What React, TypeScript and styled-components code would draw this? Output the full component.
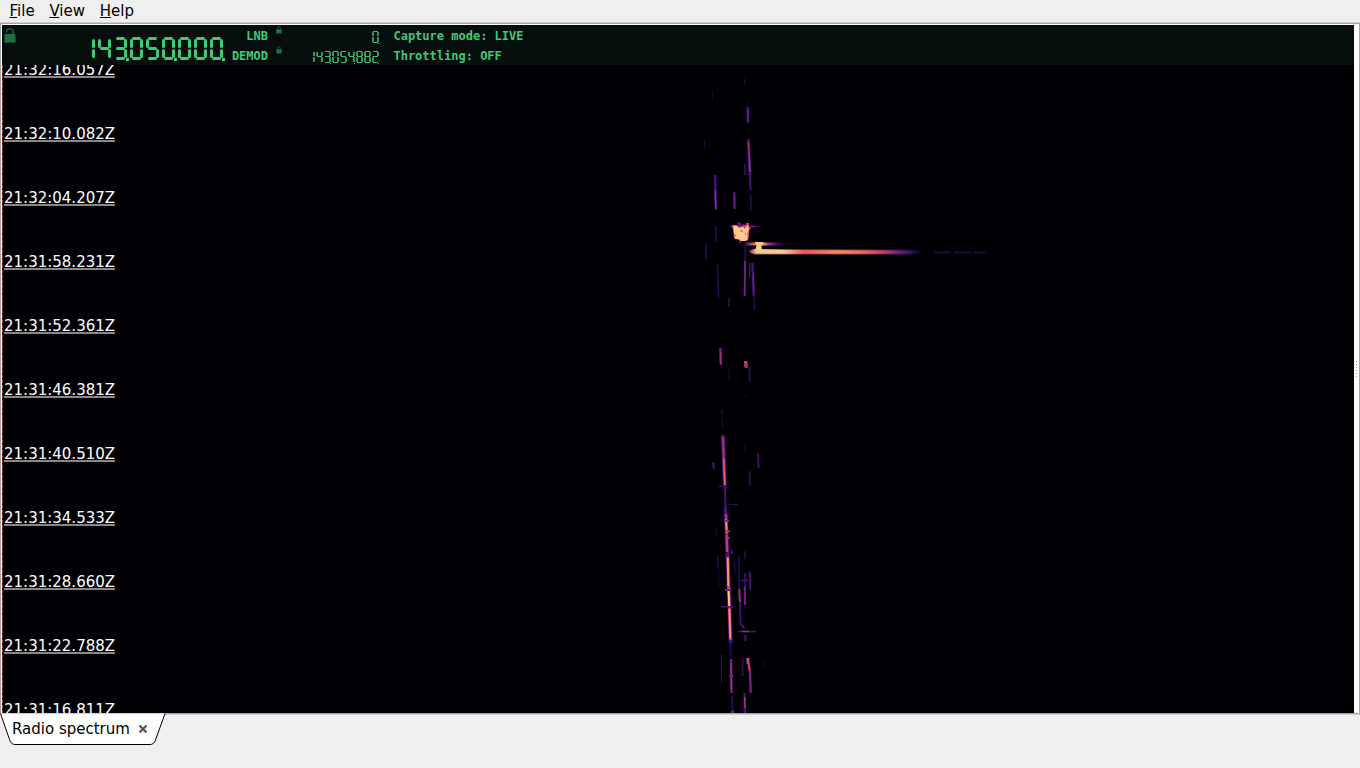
import React from "react";
import styled, { createGlobalStyle } from "styled-components";

const Global = createGlobalStyle`
  * { box-sizing: border-box; }
  html, body { margin: 0; padding: 0; overflow: hidden; background: #efefef; }
`;

const Window = styled.div`
  width: 1360px;
  height: 768px;
  display: flex;
  flex-direction: column;
  background: #efefef;
  color: #000;
  font: 15px/18px "DejaVu Sans", sans-serif;
`;

const MenuBar = styled.nav`
  height: 22px;
  flex: none;
  display: flex;
  padding: 2px 0 0 9.5px;
  gap: 14.8px;
`;

const MenuItem = styled.span`
  white-space: pre;
`;

const Mnemonic = styled.span`
  text-decoration: underline;
  text-decoration-thickness: 1px;
  text-underline-offset: 1px;
`;

const Frame = styled.main`
  height: 693px;
  flex: none;
  display: flex;
  border-top: 1px solid #cfcfcf;
  border-bottom: 1px solid #cfcfcf;
`;

const FrameInner = styled.div`
  flex: 1;
  display: flex;
  background: #fff;
  border: 1px solid #a5a5a5;
  padding: 1px 0 0 1px;
`;

const Panel = styled.section`
  width: 1352px;
  display: flex;
  flex-direction: column;
`;

const Splitter = styled.div`
  flex: 1;
  display: flex;
  flex-direction: column;
  align-items: center;
  justify-content: center;
  gap: 2px;
`;

const Grip = styled.i`
  width: 1px;
  height: 1px;
  background: #999;
`;

const Header = styled.header`
  height: 40px;
  flex: none;
  display: flex;
  background: #060d0d;
  color: #3dcb78;
  font: bold 12px/20px "DejaVu Sans Mono", monospace;
`;

const LockSlot = styled.div`
  width: 80px;
  padding: 3px 0 0 2px;
`;

const MainFrequency = styled.div`
  width: 144px;
  padding-top: 12px;
`;

const Rows = styled.div<{ $width: number; $align?: string }>`
  width: ${(p) => p.$width}px;
  display: flex;
  flex-direction: column;
  align-items: ${(p) => p.$align ?? "flex-start"};
`;

const Row = styled.div<{ $top?: number }>`
  height: 20px;
  padding-top: ${(p) => p.$top ?? 1}px;
  white-space: pre;
`;

const Display = styled.div<{ $gap: number }>`
  display: flex;
  gap: ${(p) => p.$gap}px;
`;

const Digit = styled.div<{ $small?: boolean }>`
  position: relative;
  display: grid;
  grid-template-columns: ${(p) => (p.$small ? "2px 3px 2px" : "3px 7px 3px")};
  grid-template-rows: ${(p) => (p.$small ? "1px 4px 1px 5px 1px" : "3px 7px 3px 7px 3px")};
`;

const Segment = styled.i<{ $col: number; $row: number; $small?: boolean }>`
  grid-column: ${(p) => p.$col};
  grid-row: ${(p) => p.$row};
  margin: ${(p) => (p.$small ? (p.$col === 2 ? "0 -1px" : "0") : p.$col === 2 ? "0 -1px" : "-1px 0")};
  background: ${(p) => (!p.$small ? "#3dcb78" : p.$col === 2 ? "#39bd70" : "#2b985b")};
  border-radius: ${(p) => (p.$small ? 0 : 1.5)}px;
`;

const Point = styled.i<{ $small?: boolean }>`
  position: absolute;
  right: ${(p) => (p.$small ? 0 : -2)}px;
  bottom: -1px;
  width: ${(p) => (p.$small ? 1 : 3)}px;
  height: ${(p) => (p.$small ? 1 : 3)}px;
  background: #3dcb78;
`;

const Waterfall = styled.div`
  position: relative;
  height: 648px;
  overflow: hidden;
  background: #000004;
`;

const Trace = styled.svg`
  display: block;
`;

const TimeScale = styled.div`
  position: absolute;
  left: 0;
  top: -5px;
  padding-left: 2px;
  color: #fff;
`;

const TimeMark = styled.div`
  height: 64px;
`;

const TimeLabel = styled.span`
  display: block;
  height: 18px;
  line-height: 20px;
  border-bottom: 2px solid #888;
`;

const Marker = styled.div`
  position: absolute;
  left: 0;
  top: 0;
  width: 1px;
  height: 648px;
  background: repeating-linear-gradient(#a33c3c 0 3px, #2b0d10 3px 5px);
`;

const Tabs = styled.footer`
  position: relative;
  height: 53px;
  margin-top: -2px;
`;

const Tab = styled.div`
  position: relative;
  width: 166px;
  height: 33px;
`;

const TabShape = styled.svg`
  display: block;
`;

const TabContent = styled.div`
  position: absolute;
  inset: 7px 0 0 12px;
  display: flex;
  gap: 8px;
`;

const CloseIcon = styled.svg`
  margin-top: 4px;
`;

/* Lit segments: a top, b upper right, c lower right, d bottom, e lower left, f upper left, g middle. */
const LIT: Record<string, string> = {
  "0": "abcdef", "1": "bc", "2": "abdeg", "3": "abcdg", "4": "bcfg",
  "5": "acdfg", "8": "abcdefg",
};

const CELL: Record<string, [number, number]> = {
  a: [2, 1], b: [3, 2], c: [3, 4], d: [2, 5], e: [1, 4], f: [1, 2], g: [2, 3],
};

function Frequency({ value, small }: { value: string; small?: boolean }) {
  return (
    <Display $gap={small ? 1 : 3} role="img" aria-label={value}>
      {value.split("").map((d, i) => (
        <Digit key={i} $small={small}>
          {LIT[d].split("").map((s) => (
            <Segment key={s} $col={CELL[s][0]} $row={CELL[s][1]} $small={small} />
          ))}
          {(value.length - i) % 3 === 1 && <Point $small={small} />}
        </Digit>
      ))}
    </Display>
  );
}

const LockIcon = styled.svg`
  display: block;
`;

function Lock({ small, open }: { small?: boolean; open?: boolean }) {
  return (
    <LockIcon width={small ? 6 : 12} height={small ? 8 : 15} viewBox="0 0 12 15">
      <path d={open ? "M2.5 4.5V4a3.3 3.3 0 0 1 6.6 0V7" : "M3 7V4a3 3 0 0 1 6 0V7"} fill="none" stroke="#1d5a38" strokeWidth="1.6" />
      <rect x="0.5" y="6" width="11" height="8.5" rx="0.5" fill="#217044" />
    </LockIcon>
  );
}

const TIMES = [
  "21:32:16.057Z", "21:32:10.082Z", "21:32:04.207Z", "21:31:58.231Z", "21:31:52.361Z", "21:31:46.381Z",
  "21:31:40.510Z", "21:31:34.533Z", "21:31:28.660Z", "21:31:22.788Z", "21:31:16.811Z",
];

/* Signal levels of the colour map, faint to strong. */
const LEVEL = ["#100b2d", "#231151", "#451077", "#721f81", "#9f2f7f", "#cd4071", "#f1605d", "#fd9567", "#fec98d"];

/* Echo trails: x1, y1, x2, y2, level, width. */
const TRAILS: [number, number, number, number, number, number][] = [
  [745, 78, 744.5, 86, 0, 1.5], [712.5, 90, 712.5, 99, 0, 1], [747.5, 101, 747.5, 107, 0, 1],
  [747.7, 107, 748, 123, 2, 2.6], [748, 110, 748, 121, 3, 1.5], [704.5, 141, 704.5, 147, 1, 1],
  [714.5, 149, 714.5, 154, 0, 1], [748.2, 139, 750, 175, 2, 3], [748.7, 142, 749.8, 172, 4, 1.4],
  [744.8, 164, 744.8, 175, 1, 2], [750, 175, 750.5, 190, 2, 2], [750.5, 195, 751, 211, 1, 1.6],
  [715, 175, 716, 210, 2, 2.5], [715.2, 190, 715.7, 208, 4, 1.2], [734.3, 192, 734.5, 209, 2, 2.6], [734.5, 194, 734.5, 207, 3, 1.2],
  [715.5, 226, 716.5, 242, 1, 1.5], [705.8, 244, 706.2, 259, 1, 1.5], [717.5, 264, 718.7, 297, 1, 1.5],
  [729.5, 297, 728.5, 307, 1, 1.8], [745.2, 242, 745, 262, 1, 1.5], [745, 261, 744.7, 296, 3, 2],
  [749.7, 263, 749.7, 277, 2, 1.5], [752.5, 263, 753.8, 296, 2, 2.5], [753, 273, 753.7, 292, 3, 1.2],
  [754, 296, 754.4, 310, 1, 1.3], [720.4, 348, 720.8, 365, 3, 2.5], [720.6, 352, 720.8, 363, 4, 1],
  [729, 368, 729.4, 381, 0, 1.5], [721.5, 377, 721.5, 381, 0, 1], [749.5, 367, 749.8, 382, 1, 2],
  [745.7, 361, 745.9, 367, 5, 3.2], [746, 363, 746.2, 368, 4, 3], [745, 394, 745, 397, 0, 1], [721.8, 409, 722, 414, 1, 1.5],
  [722.3, 418, 722.4, 428, 0, 1.5], [745, 445, 744.7, 451, 0, 1.5], [758, 453, 758.6, 468, 2, 1.8],
  [713, 462, 714, 469, 2, 2], [722.8, 435, 725, 488, 2, 4], [723, 437, 724.8, 486, 4, 2.2],
  [723.8, 459, 724.8, 485, 6, 1.5], [749.8, 471, 750, 486, 1, 1.8], [718.5, 486, 727, 486.5, 1, 1.5],
  [725, 487, 725.5, 518, 2, 2], [725.2, 504, 725.8, 510, 2, 2], [729, 504.5, 738, 504.5, 1, 1.3],
  [725.5, 509, 727.5, 557, 2, 3.6], [726, 514, 727.2, 552, 4, 2.5], [726, 519, 726.8, 533, 7, 1.8],
  [727, 536, 727.2, 552, 5, 1.5], [724, 520.5, 729, 521, 3, 2], [725, 531, 730, 531.5, 4, 2],
  [725, 537.5, 729.5, 538, 4, 2], [716.5, 526, 716.5, 537, 0, 1], [717.5, 556, 718.2, 569, 1, 1.5],
  [718.5, 571, 719, 588, 0, 1], [731.8, 550, 732, 554, 2, 2], [734, 562, 735, 571, 1, 1.2],
  [745, 551, 745.2, 559, 1, 1.5], [738.8, 557, 739, 590, 1, 1.6], [739.2, 589, 740, 602, 4, 2],
  [745, 573, 744.8, 588, 2, 1.5], [744.8, 587, 745, 605, 3, 2.2], [741, 580.5, 748, 580.5, 2, 1.6],
  [750, 572, 750.1, 590, 2, 2], [727.5, 555, 730.7, 643, 2, 4], [727.7, 556, 730.4, 640, 5, 2.6],
  [727.8, 558, 728.2, 586, 7, 1.8], [728.5, 591, 729.2, 606, 8, 1.8], [729.4, 609, 730.3, 638, 7, 1.6],
  [725, 556, 730, 556, 2, 2], [725, 590, 731, 590, 3, 2], [721, 606.7, 734, 607, 2, 1.4],
  [730.6, 643, 730.7, 657, 1, 1.5], [740, 602, 740.5, 624, 2, 1.6], [740.5, 624, 744.5, 628, 2, 1.8],
  [738, 631.5, 756, 631.5, 2, 1.7], [742, 631.5, 749, 631.5, 4, 1.3], [745.3, 635, 745.4, 641, 2, 2],
  [721.4, 654, 721.6, 683, 1, 1.2], [731, 659, 731.5, 693, 3, 2.4], [731.2, 663, 731.4, 690, 4, 1.2],
  [729, 676, 733.5, 676, 3, 1.5], [742.8, 659, 742.6, 676, 1, 2], [747.8, 658, 748.2, 664, 5, 3],
  [748.3, 662, 750, 672, 5, 2.2], [750, 671, 750.7, 693, 3, 2.4], [764, 660, 764, 668, 0, 1],
  [732.2, 696, 732.4, 713, 1, 1.8], [744.6, 693, 745, 713, 2, 2.5], [744.7, 697, 744.9, 708, 4, 1.5],
  [732, 711, 733, 713, 3, 3],
];

function Spectrogram() {
  return (
    <Trace width="1352" height="648" viewBox="2 65 1352 648">
      <defs>
        <linearGradient id="echo" gradientUnits="userSpaceOnUse" x1="748" y1="0" x2="922" y2="0">
          <stop offset="0" stopColor="#721f81" />
          <stop offset="0.05" stopColor="#fec98d" />
          <stop offset="0.2" stopColor="#fec98d" />
          <stop offset="0.32" stopColor="#ec5860" />
          <stop offset="0.52" stopColor="#fb8861" />
          <stop offset="0.68" stopColor="#f1605d" />
          <stop offset="0.8" stopColor="#ad347c" />
          <stop offset="0.9" stopColor="#5a167e" />
          <stop offset="1" stopColor="#000004" />
        </linearGradient>
        <linearGradient id="side" gradientUnits="userSpaceOnUse" x1="746" y1="0" x2="786" y2="0">
          <stop offset="0" stopColor="#451077" />
          <stop offset="0.2" stopColor="#f1605d" />
          <stop offset="0.4" stopColor="#fec98d" />
          <stop offset="0.55" stopColor="#b73779" />
          <stop offset="0.75" stopColor="#451077" />
          <stop offset="1" stopColor="#000004" />
        </linearGradient>
      </defs>
      {TRAILS.map(([x1, y1, x2, y2, level, width], i) => (
        <line key={i} x1={x1} y1={y1} x2={x2} y2={y2} stroke={LEVEL[level]} strokeWidth={width} />
      ))}
      <rect x="746" y="242.5" width="40" height="3" fill="url(#side)" />
      <path d="M748 250L755 249L850 249.5H922V254.5H754L750 253Z" fill="url(#echo)" opacity="0.55" />
      <path d="M750 251L755 249L785 250L922 250.7V253.7H756L751 252.7Z" fill="url(#echo)" />
      <path d="M755 242H763L761.5 246L762 250H755L756.5 246Z" fill="#fec98d" />
      <path d="M934 252.5H951M954 252.5H972M974 252.5H987" stroke="#150e37" strokeWidth="2" />
      <path d="M749 226.5H761" stroke="#231151" strokeWidth="1.5" />
      <path d="M730.5 226.5H755M738.5 222V229M740.5 223V230M743 224V228M747 223V230M740 240V243" stroke="#721f81" strokeWidth="1.6" />
      <path d="M732 225H735L739 227L744 225H746V223H749V227L751 228L749 231V238L747 241L743 239L741 242L739 239L734 238L733 231Z" fill="#cd4071" />
      <path d="M733 226L737 225.5L739 228L743 227L745 228L748 225L749 230L747.5 233V240L745 241H741L739 239.5L735 239L734 232Z" fill="#fec98d" />
      <path d="M740.5 231H742.5M744 228H745M735 235.5H736M745 234H746" stroke="#cd4071" strokeWidth="1.5" />
    </Trace>
  );
}

export default function App() {
  return (
    <Window>
      <Global />
      <MenuBar>
        {["File", "View", "Help"].map((m) => (
          <MenuItem key={m}><Mnemonic>{m[0]}</Mnemonic>{m.slice(1)}</MenuItem>
        ))}
      </MenuBar>
      <Frame>
        <FrameInner>
          <Panel>
            <Header>
              <LockSlot><Lock open /></LockSlot>
              <MainFrequency><Frequency value="143050000" /></MainFrequency>
              <Rows $width={42} $align="flex-end"><Row>LNB</Row><Row>DEMOD</Row></Rows>
              <Rows $width={14} $align="flex-end"><Row><Lock small /></Row><Row><Lock small /></Row></Rows>
              <Rows $width={97} $align="flex-end">
                <Row $top={6}><Frequency value="0" small /></Row>
                <Row $top={6}><Frequency value="143054882" small /></Row>
              </Rows>
              <Rows $width={300}>
                <Row>{"  Capture mode: LIVE"}</Row>
                <Row>{"  Throttling: OFF"}</Row>
              </Rows>
            </Header>
            <Waterfall>
              <Spectrogram />
              <TimeScale>
                {TIMES.map((t) => <TimeMark key={t}><TimeLabel>{t}</TimeLabel></TimeMark>)}
              </TimeScale>
              <Marker />
            </Waterfall>
          </Panel>
          <Splitter>{[0, 1, 2, 3, 4, 5].map((n) => <Grip key={n} />)}</Splitter>
        </FrameInner>
      </Frame>
      <Tabs>
        <Tab>
          <TabShape width="166" height="33" viewBox="0 0 166 33">
            <path d="M0.5 0.5L9.5 26.5Q11 31.5 15 31.5H150Q154 31.5 155.5 27L165 0.5" fill="#fff" stroke="#000" strokeWidth="1" />
          </TabShape>
          <TabContent>
            Radio spectrum
            <CloseIcon width="10" height="10" viewBox="0 0 10 10">
              <path d="M1.5 1.5L8.5 8.5M8.5 1.5L1.5 8.5" stroke="#555" strokeWidth="2.2" />
            </CloseIcon>
          </TabContent>
        </Tab>
      </Tabs>
    </Window>
  );
}
